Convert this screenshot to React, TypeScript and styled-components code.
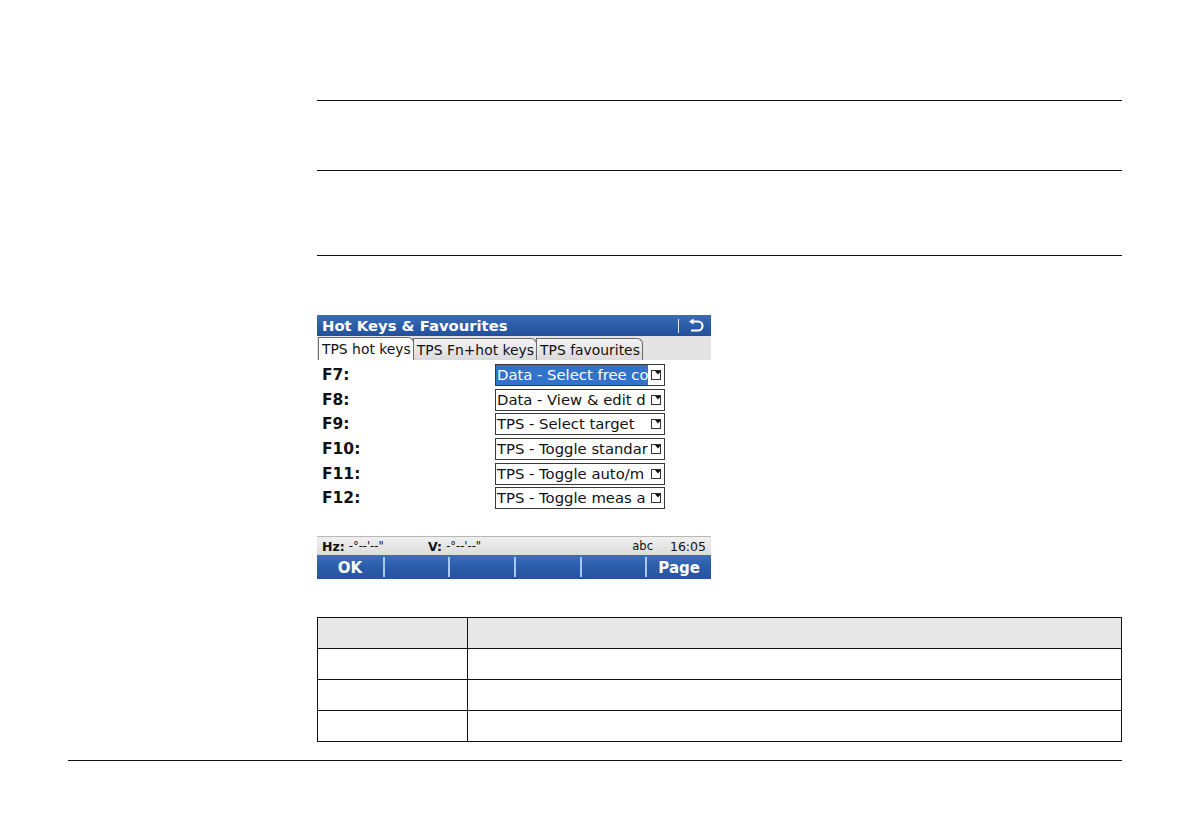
import React from "react";
import styled, { createGlobalStyle } from "styled-components";

const Global = createGlobalStyle`
  html, body { margin: 0; padding: 0; background: #ffffff; }
  body { width: 1190px; height: 840px; overflow: hidden; font-family: "Liberation Sans", Arial, sans-serif; }
  * { box-sizing: border-box; }
`;

const Page = styled.div`
  width: 1190px;
  height: 840px;
  padding-top: 100px;
  display: flex;
  flex-direction: column;
`;

const Content = styled.div`
  margin-left: 317px;
  width: 805px;
  display: flex;
  flex-direction: column;
`;

const Section = styled.div<{ $h: number; $last?: boolean }>`
  height: ${(p) => p.$h}px;
  border-top: 1px solid #111;
  ${(p) => (p.$last ? "border-bottom: 1px solid #111;" : "")}
`;

const Device = styled.div`
  margin-top: 59px;
  width: 394px;
  height: 264px;
  display: flex;
  flex-direction: column;
  font-family: "DejaVu Sans", Verdana, sans-serif;
  background: #fff;
`;

const TitleBar = styled.div`
  height: 21px;
  background: linear-gradient(#3a6cb8, #2a5aa6 60%, #24509a);
  display: flex;
  align-items: center;
  padding-left: 5px;
  color: #fff;
  font-weight: bold;
  font-size: 14.8px;
`;

const TitleText = styled.div`
  flex: 1;
  white-space: nowrap;
`;

const TitleSep = styled.div`
  width: 1px;
  height: 14px;
  background: #dfe8f5;
  margin-right: 8px;
`;

const BackIcon = styled.svg`
  width: 18px;
  height: 16px;
  margin-right: 6px;
`;

const TabRow = styled.div`
  height: 24px;
  background: #e4e4e4;
  display: flex;
  align-items: flex-end;
  padding-left: 1px;
`;

const Tab = styled.div<{ $active?: boolean }>`
  height: 22px;
  padding: 0 2px 0 3px;
  display: flex;
  align-items: center;
  font-size: 13.9px;
  color: #111;
  white-space: nowrap;
  border: 1px solid #6a6a6a;
  border-bottom: none;
  border-top-right-radius: 6px;
  margin-right: -1px;
  background: ${(p) => (p.$active ? "#ffffff" : "linear-gradient(#f4f4f4, #dadada)")};
  ${(p) => (p.$active ? "height: 23px;" : "")}
`;

const Body = styled.div`
  height: 176px;
  padding-top: 3px;
  display: flex;
  flex-direction: column;
`;

const Row = styled.div`
  height: 24.6px;
  display: flex;
  align-items: center;
  padding-left: 5px;
`;

const Label = styled.div`
  width: 173px;
  font-weight: bold;
  font-size: 15.5px;
  color: #111;
`;

const Field = styled.div`
  width: 170px;
  height: 22px;
  border: 1px solid #3a3a3a;
  display: flex;
  align-items: stretch;
  background: #fff;
`;

const FieldText = styled.div<{ $selected?: boolean }>`
  flex: 1;
  overflow: hidden;
  white-space: nowrap;
  font-size: 14.8px;
  line-height: 20px;
  padding-left: 1px;
  color: ${(p) => (p.$selected ? "#ffffff" : "#111")};
  background: ${(p) => (p.$selected ? "#3372c9" : "transparent")};
`;

const DropIcon = styled.svg`
  width: 16px;
  height: 20px;
  flex: none;
`;

const StatusBar = styled.div`
  height: 19px;
  background: linear-gradient(#f0f0f0, #dcdcdc);
  border-top: 1px solid #b8b8b8;
  display: flex;
  align-items: center;
  padding: 0 5px;
  font-size: 11.5px;
  color: #111;
  white-space: nowrap;
`;

const StatusItem = styled.div<{ $w?: number }>`
  ${(p) => (p.$w ? `width: ${p.$w}px;` : "")}
  display: flex;
  align-items: center;
`;

const Bold = styled.span`
  font-weight: bold;
  font-size: 12.5px;
  margin-right: 4px;
`;

const Spacer = styled.div`
  flex: 1;
`;

const Clock = styled.div`
  margin-left: 17px;
  font-size: 12.5px;
`;

const SoftBar = styled.div`
  height: 24px;
  background: linear-gradient(#3b6fbd, #2a5ba8 55%, #2652a0);
  display: grid;
  grid-template-columns: repeat(6, 1fr);
  align-items: center;
`;

const SoftKey = styled.div<{ $first?: boolean }>`
  height: 20px;
  display: flex;
  align-items: center;
  justify-content: center;
  color: #fff;
  font-weight: bold;
  font-size: 15px;
  padding-top: 1px;
  border-left: ${(p) => (p.$first ? "none" : "2px solid #a9c8ef")};
`;

const Table = styled.div`
  margin-top: 38px;
  width: 805px;
  border: 1px solid #111;
  display: grid;
  grid-template-columns: 150px 1fr;
`;

const Cell = styled.div<{ $head?: boolean; $left?: boolean; $lastRow?: boolean }>`
  height: ${(p) => (p.$lastRow ? 30 : 31)}px;
  background: ${(p) => (p.$head ? "#e7e7e7" : "#fff")};
  border-bottom: ${(p) => (p.$lastRow ? "none" : "1px solid #111")};
  border-right: ${(p) => (p.$left ? "1px solid #111" : "none")};
`;

const Footer = styled.div`
  margin-top: 18px;
  margin-left: 68px;
  width: 1054px;
  border-top: 1px solid #111;
`;

const rows = [
  { key: "F7:", value: "Data - Select free co", selected: true },
  { key: "F8:", value: "Data - View & edit d" },
  { key: "F9:", value: "TPS - Select target" },
  { key: "F10:", value: "TPS - Toggle standar" },
  { key: "F11:", value: "TPS - Toggle auto/m" },
  { key: "F12:", value: "TPS - Toggle meas a" },
];

const Drop = () => (
  <DropIcon viewBox="0 0 16 20">
    <rect x="3.5" y="5.5" width="9" height="9" fill="#fff" stroke="#333" strokeWidth="1" />
    <path d="M7 6 L13 6 L10 9.5 Z" fill="#111" />
  </DropIcon>
);

export default function App() {
  return (
    <>
      <Global />
      <Page>
        <Content>
          <Section $h={70} />
          <Section $h={86} $last />
          <Device>
            <TitleBar>
              <TitleText>Hot Keys &amp; Favourites</TitleText>
              <TitleSep />
              <BackIcon viewBox="0 0 18 16">
                <path d="M5 3.5 H11 A4.5 4.5 0 0 1 11 12.5 H4" fill="none" stroke="#fff" strokeWidth="2.2" />
                <path d="M2 3.5 L6.5 0.5 L6.5 6.5 Z" fill="#fff" />
              </BackIcon>
            </TitleBar>
            <TabRow>
              <Tab $active>TPS hot keys</Tab>
              <Tab>TPS Fn+hot keys</Tab>
              <Tab>TPS favourites</Tab>
            </TabRow>
            <Body>
              {rows.map((r) => (
                <Row key={r.key}>
                  <Label>{r.key}</Label>
                  <Field>
                    <FieldText $selected={r.selected}>{r.value}</FieldText>
                    <Drop />
                  </Field>
                </Row>
              ))}
            </Body>
            <StatusBar>
              <StatusItem $w={106}>
                <Bold>Hz:</Bold>-°--'--"
              </StatusItem>
              <StatusItem>
                <Bold>V:</Bold>-°--'--"
              </StatusItem>
              <Spacer />
              <StatusItem>abc</StatusItem>
              <Clock>16:05</Clock>
            </StatusBar>
            <SoftBar>
              <SoftKey $first>OK</SoftKey>
              <SoftKey />
              <SoftKey />
              <SoftKey />
              <SoftKey />
              <SoftKey>Page</SoftKey>
            </SoftBar>
          </Device>
          <Table>
            <Cell $head $left />
            <Cell $head />
            <Cell $left />
            <Cell />
            <Cell $left />
            <Cell />
            <Cell $left $lastRow />
            <Cell $lastRow />
          </Table>
        </Content>
        <Footer />
      </Page>
    </>
  );
}
